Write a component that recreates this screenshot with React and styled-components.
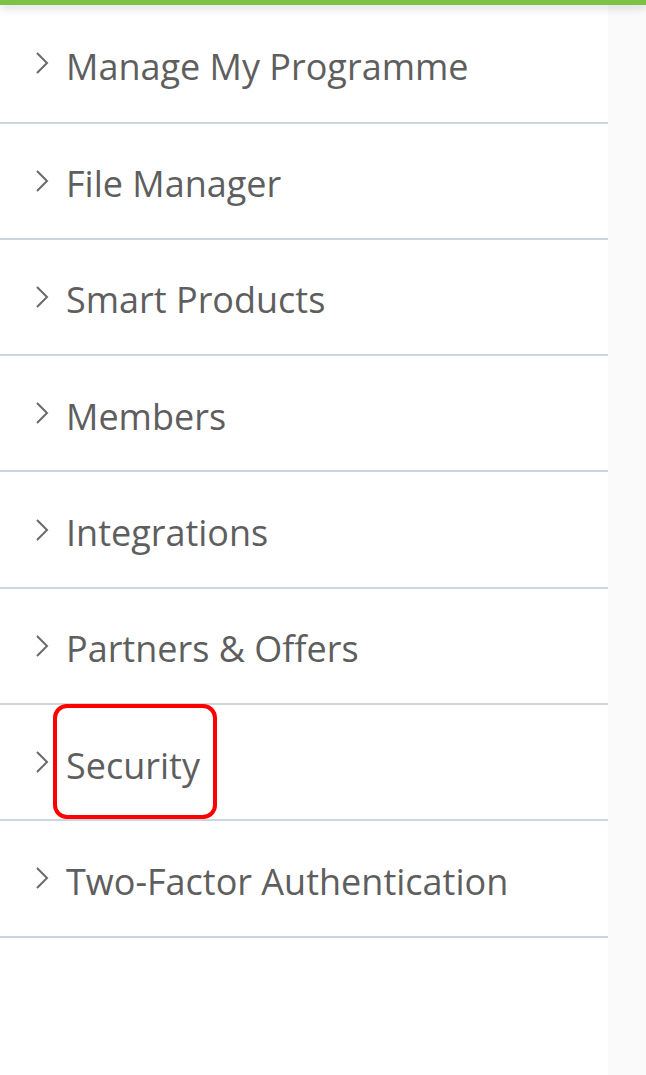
import styled, { createGlobalStyle } from 'styled-components';

const GlobalStyle = createGlobalStyle`
  html, body { margin: 0; padding: 0; background: #fafafa; }
  body { font-family: "Open Sans", "Noto Sans", sans-serif; }
`;

const items = [
  'Manage My Programme',
  'File Manager',
  'Smart Products',
  'Members',
  'Integrations',
  'Partners & Offers',
  'Security',
  'Two-Factor Authentication',
];

const App = () => {
  return (
    <>
      <GlobalStyle />
      <Page>
        <TopBar />
        <Body>
          <Sidebar>
            {items.map((label) => (
              <Row key={label}>
                <Chevron viewBox="0 0 14 24">
                  <path d="M2 2 L12 12 L2 22" fill="none" stroke="currentColor" strokeWidth="2" />
                </Chevron>
                <Label $marked={label === 'Security'}>{label}</Label>
              </Row>
            ))}
          </Sidebar>
          <Aside />
        </Body>
      </Page>
    </>
  );
};

const Page = styled.div`
  width: 646px;
  height: 1075px;
  display: flex;
  flex-direction: column;
  overflow: hidden;
`;

const TopBar = styled.div`
  height: 5px;
  background: #7dc242;
  flex-shrink: 0;
  position: relative;
  z-index: 1;
  box-shadow: 0 3px 8px rgba(0, 0, 0, 0.18);
`;

const Body = styled.div`
  flex: 1;
  display: flex;
`;

const Sidebar = styled.nav`
  width: 608px;
  background: #ffffff;
  display: flex;
  flex-direction: column;
`;

const Aside = styled.div`
  flex: 1;
  background: #fafafa;
`;

const Row = styled.div`
  height: 114.3px;
  border-bottom: 2px solid #cdd5df;
  display: flex;
  align-items: center;
  padding-left: 35px;
  flex-shrink: 0;
  &:first-child {
    height: 116.5px;
  }
`;

const Chevron = styled.svg`
  width: 14px;
  height: 24px;
  color: #6a6a6a;
  flex-shrink: 0;
  margin-right: 17px;
  margin-top: 0;
`;

const Label = styled.span`
  position: relative;
  padding-top: 6px;
  font-size: 36px;
  color: #5e5e5e;
  &::after {
    content: '';
    display: ${(p) => (p.$marked ? 'block' : 'none')};
    position: absolute;
    left: -13px;
    right: -17px;
    top: -31px;
    bottom: -29px;
    border: 4px solid #ff0000;
    border-radius: 14px;
  }
`;

export default App;
